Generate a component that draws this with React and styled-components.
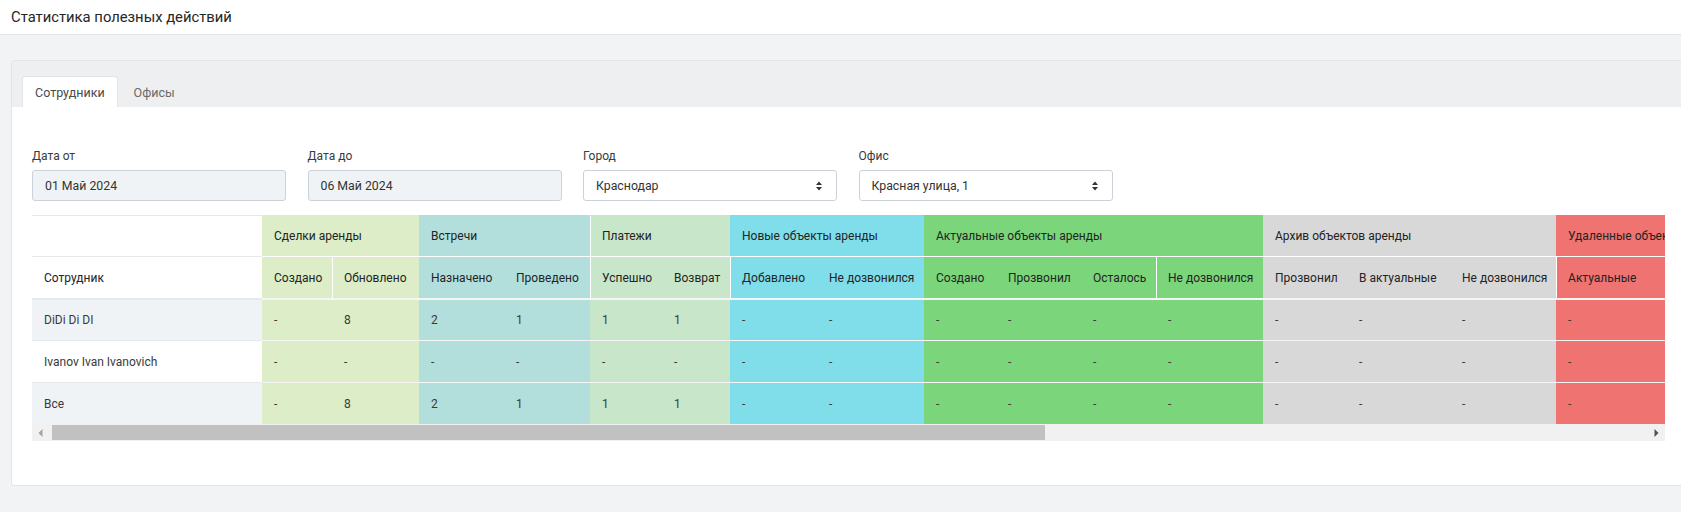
import styled, { createGlobalStyle } from "styled-components";

const GlobalStyle = createGlobalStyle`
  html, body {
    margin: 0;
    background: #f2f3f5;
    overflow: hidden;
  }
  body {
    font-family: Roboto, "Noto Sans", Arial, sans-serif;
    font-size: 13px;
    color: #333;
  }
  * { box-sizing: border-box; }
`;

const TopBar = styled.header`
  height: 35px;
  background: #fff;
  border-bottom: 1px solid #e3e5e8;
  display: flex;
  align-items: center;
  padding-left: 11px;
`;

const PageTitle = styled.h1`
  margin: 0;
  font-size: 14.8px;
  font-weight: 400;
  color: #262626;
`;

const Content = styled.main`
  padding: 25px 0 0 11px;
`;

const Card = styled.section`
  width: 1720px;
  background: #fff;
  border: 1px solid #e1e4e8;
  border-radius: 3px;
`;

const CardHeader = styled.div`
  background: #eeeff1;
  padding: 15px 0 0 10px;
  display: flex;
  gap: 3px;
`;

const Tab = styled.div`
  height: 31px;
  padding: 0 12px;
  display: flex;
  align-items: center;
  font-size: 12.5px;
  color: ${(p) => (p.$active ? "#4a4a4a" : "#6b6b6b")};
  background: ${(p) => (p.$active ? "#fff" : "transparent")};
  border: 1px solid ${(p) => (p.$active ? "#e1e4e8" : "transparent")};
  border-bottom: none;
  border-radius: 3px 3px 0 0;
`;

const CardBody = styled.div`
  padding: 40px 0 44px 20px;
`;

const Filters = styled.div`
  display: grid;
  grid-template-columns: repeat(4, 254px);
  column-gap: 21.5px;
`;

const Field = styled.div`
  display: flex;
  flex-direction: column;
  gap: 5px;
`;

const Label = styled.label`
  line-height: 18px;
  font-size: 12px;
  color: #3a3a3a;
`;

const Control = styled.div`
  height: 31px;
  display: flex;
  align-items: center;
  justify-content: space-between;
  padding: 0 13px 0 12px;
  border: 1px solid #cdd2d9;
  border-radius: 3px;
  background: ${(p) => (p.$readonly ? "#f0f3f6" : "#fff")};
  font-size: 12.3px;
  color: #333;
`;

const TableScroll = styled.div`
  width: 1633px;
  margin-top: 14px;
  overflow: hidden;
`;

const Table = styled.table`
  width: ${(p) => p.$width}px;
  border-collapse: separate;
  border-spacing: 0;
  table-layout: fixed;
  white-space: nowrap;
`;

const Row = styled.tr`
  height: ${(p) => p.$h}px;
`;

const Cell = styled.td`
  padding: 0 12px;
  vertical-align: middle;
  text-align: left;
  font-weight: 400;
  font-size: 12px;
  color: ${(p) => (p.$head ? "#232323" : "#3a3a3a")};
  background: ${(p) => p.$bg || "#fff"};
  border-top: ${(p) => p.$top || 1}px solid ${(p) => p.$line || (p.$bg ? "#f5f5f5" : "#e6e9ec")};
  box-shadow: ${(p) => (p.$divider ? "inset 1px 0 0 #fff" : "none")};
  overflow: hidden;
`;

const ScrollBar = styled.div`
  width: 1633px;
  height: 17px;
  background: #f1f1f1;
  display: flex;
  align-items: center;
`;

const ArrowBtn = styled.div`
  width: 17px;
  height: 17px;
  display: flex;
  align-items: center;
  justify-content: center;
`;

const Track = styled.div`
  flex: 1;
  height: 17px;
  display: flex;
  align-items: center;
`;

const Thumb = styled.div`
  margin-left: 3px;
  width: 993px;
  height: 15px;
  background: #c1c1c1;
`;

const groups = [
  { title: "Сделки аренды", bg: "#dcedc8", cols: ["Создано", "Обновлено"], widths: [70, 87], dividers: [false, true] },
  { title: "Встречи", bg: "#b2dfdb", cols: ["Назначено", "Проведено"], widths: [85, 86] },
  { title: "Платежи", bg: "#c8e6c9", cols: ["Успешно", "Возврат"], widths: [72, 68], headDivider: true, dividers: [true, false] },
  { title: "Новые объекты аренды", bg: "#80deea", cols: ["Добавлено", "Не дозвонился"], widths: [87, 107], dividers: [true, false] },
  { title: "Актуальные объекты аренды", bg: "#7bd57a", cols: ["Создано", "Прозвонил", "Осталось", "Не дозвонился"], widths: [72, 85, 75, 107], dividers: [false, false, false, true] },
  { title: "Архив объектов аренды", bg: "#d8d8d8", cols: ["Прозвонил", "В актуальные", "Не дозвонился"], widths: [84, 103, 106] },
  { title: "Удаленные объекты аренды", bg: "#ee7371", cols: ["Актуальные", "Архивные"], widths: [120, 100], dividers: [true, false] },
];

const filled = ["-", "8", "2", "1", "1", "1"];

const rows = [
  { name: "DiDi Di DI", bg: "#f0f3f6", values: filled },
  { name: "Ivanov Ivan Ivanovich", bg: null, values: [] },
  { name: "Все", bg: "#f0f3f6", values: filled },
];

function SortArrows() {
  return (
    <svg width="8" height="10" viewBox="0 0 8 10">
      <path d="M4 0.5 L7 4 L1 4 Z" fill="#333" />
      <path d="M1 6 L7 6 L4 9.5 Z" fill="#333" />
    </svg>
  );
}

function StatsTable() {
  const cols = groups.flatMap((g) =>
    g.cols.map((c, i) => ({ label: c, width: g.widths[i], bg: g.bg, divider: g.dividers ? g.dividers[i] : false }))
  );
  const total = 230 + cols.reduce((s, c) => s + c.width, 0);
  return (
    <Table $width={total}>
      <colgroup>
        <col style={{ width: 230 }} />
        {cols.map((c, i) => (
          <col key={i} style={{ width: c.width }} />
        ))}
      </colgroup>
      <thead>
        <Row $h={41}>
          <Cell as="th" $head />
          {groups.map((g) => (
            <Cell as="th" key={g.title} colSpan={g.cols.length} $head $bg={g.bg} $line={g.bg} $divider={g.headDivider}>
              {g.title}
            </Cell>
          ))}
        </Row>
        <Row $h={42}>
          <Cell as="th" $head>Сотрудник</Cell>
          {cols.map((c, i) => (
            <Cell as="th" key={i} $head $bg={c.bg} $line="#fff" $divider={c.divider}>
              {c.label}
            </Cell>
          ))}
        </Row>
      </thead>
      <tbody>
        {rows.map((r, ri) => (
          <Row $h={42} key={r.name}>
            <Cell $bg={r.bg} $line="#e6e9ec" $top={ri === 0 ? 2 : 1}>
              {r.name}
            </Cell>
            {cols.map((c, i) => (
              <Cell key={i} $bg={c.bg} $top={ri === 0 ? 2 : 1}>
                {r.values[i] || "-"}
              </Cell>
            ))}
          </Row>
        ))}
      </tbody>
    </Table>
  );
}

export default function App() {
  return (
    <>
      <GlobalStyle />
      <TopBar>
        <PageTitle>Статистика полезных действий</PageTitle>
      </TopBar>
      <Content>
        <Card>
          <CardHeader>
            <Tab $active>Сотрудники</Tab>
            <Tab>Офисы</Tab>
          </CardHeader>
          <CardBody>
            <Filters>
              <Field>
                <Label>Дата от</Label>
                <Control $readonly>01 Май 2024</Control>
              </Field>
              <Field>
                <Label>Дата до</Label>
                <Control $readonly>06 Май 2024</Control>
              </Field>
              <Field>
                <Label>Город</Label>
                <Control>
                  Краснодар
                  <SortArrows />
                </Control>
              </Field>
              <Field>
                <Label>Офис</Label>
                <Control>
                  Красная улица, 1
                  <SortArrows />
                </Control>
              </Field>
            </Filters>
            <TableScroll>
              <StatsTable />
            </TableScroll>
            <ScrollBar>
              <ArrowBtn>
                <svg width="5" height="8" viewBox="0 0 5 8">
                  <path d="M4.5 0 L0.5 4 L4.5 8 Z" fill="#a3a3a3" />
                </svg>
              </ArrowBtn>
              <Track>
                <Thumb />
              </Track>
              <ArrowBtn>
                <svg width="5" height="8" viewBox="0 0 5 8">
                  <path d="M0.5 0 L4.5 4 L0.5 8 Z" fill="#505050" />
                </svg>
              </ArrowBtn>
            </ScrollBar>
          </CardBody>
        </Card>
      </Content>
    </>
  );
}
